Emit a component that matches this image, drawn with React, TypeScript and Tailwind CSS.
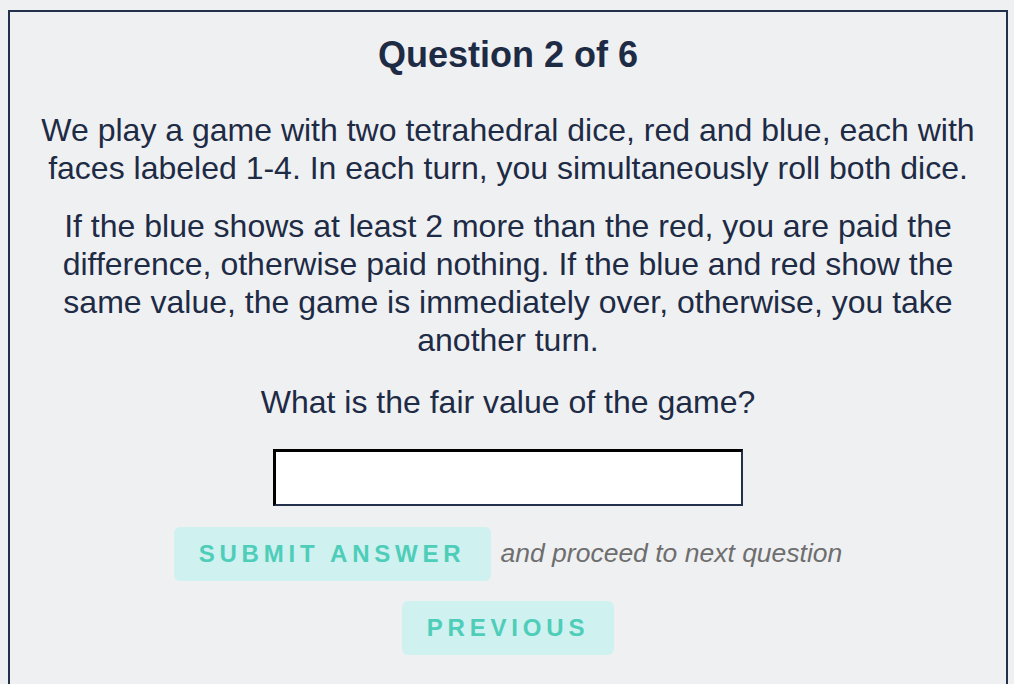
const font = { fontFamily: '"Liberation Sans", Arial, sans-serif' };

const Question = () => {
  return (
    <div className="min-h-screen bg-[#eff0f2] pl-2 pt-[10px]" style={font}>
      <div className="flex min-h-[700px] w-[1000px] flex-col items-center border-2 border-[#24314d] px-7 text-[#1e2b45]">
        <h1 className="mt-[21px] text-[36px] font-bold leading-[44px]">
          Question 2 of 6
        </h1>

        <p className="mt-[34px] text-center text-[32px] leading-[38px]">
          We play a game with two tetrahedral dice, red and blue, each with
          faces labeled 1-4. In each turn, you simultaneously roll both dice.
        </p>
        <p className="mt-[20px] text-center text-[32px] leading-[38px]">
          If the blue shows at least 2 more than the red, you are paid the
          difference, otherwise paid nothing. If the blue and red show the same
          value, the game is immediately over, otherwise, you take another
          turn.
        </p>
        <p className="mt-[24px] text-center text-[32px] leading-[38px]">
          What is the fair value of the game?
        </p>

        <input
          type="text"
          className="mt-[28px] h-[57px] w-[470px] border-t-[3px] border-l-[3px] border-r-2 border-b-2 border-t-black border-l-black border-r-[#24314d] border-b-[#24314d] bg-white px-3 text-[22px] outline-none"
        />

        <div className="mt-[21px] flex items-center gap-[10px]">
          <button className="h-[54px] rounded-md bg-[#cff1ef] px-[25px] text-[24px] font-bold tracking-[0.2em] text-[#4ecdb9]">
            SUBMIT ANSWER
          </button>
          <span className="text-[26.5px] italic text-[#6e6e6e]">
            and proceed to next question
          </span>
        </div>

        <button className="mt-[20px] h-[54px] rounded-md bg-[#cff1ef] px-[25px] text-[24px] font-bold tracking-[0.2em] text-[#4ecdb9]">
          PREVIOUS
        </button>
      </div>
    </div>
  );
};

export default function App() {
  return <Question />;
}
